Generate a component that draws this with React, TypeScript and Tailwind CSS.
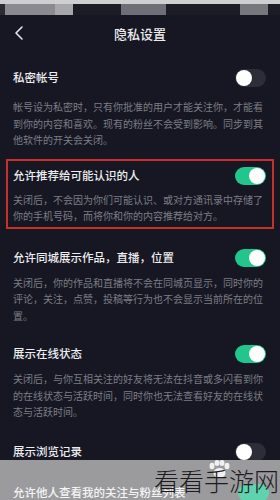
import React from "react";

interface Section {
  title: string;
  lines: string[];
  on: boolean;
  boxed?: boolean;
}

const sections: Section[] = [
  {
    title: "私密帐号",
    lines: [
      "帐号设为私密时，只有你批准的用户才能关注你，才能看",
      "到你的内容和喜欢。现有的粉丝不会受到影响。同步到其",
      "他软件的开关会关闭。",
    ],
    on: false,
  },
  {
    title: "允许推荐给可能认识的人",
    lines: [
      "关闭后，不会因为你们可能认识、或对方通讯录中存储了",
      "你的手机号码，而将你和你的内容推荐给对方。",
    ],
    on: true,
    boxed: true,
  },
  {
    title: "允许同城展示作品，直播，位置",
    lines: [
      "关闭后，你的作品和直播将不会在同城页显示，同时你的",
      "评论，关注，点赞，投稿等行为也不会显示当前所在的位",
      "置。",
    ],
    on: true,
  },
  {
    title: "展示在线状态",
    lines: [
      "关闭后，与你互相关注的好友将无法在抖音或多闪看到你",
      "的在线状态与活跃时间，同时你也无法查看好友的在线状",
      "态与活跃时间。",
    ],
    on: true,
  },
];

function Toggle({ on }: { on: boolean }) {
  return (
    <div
      className={`w-[31px] h-[18px] rounded-full flex items-center px-[1px] ${
        on ? "bg-[#22c58b] justify-end" : "bg-[#2c2d37] justify-start"
      }`}
    >
      <div className="w-[16px] h-[16px] rounded-full bg-white" />
    </div>
  );
}

export default function App(): React.JSX.Element {
  const gaps = ["mt-[14px]", "mt-[8px]", "mt-[17px]", "mt-[16px]"];
  const descGaps = ["mt-[11px]", "mt-[6px]", "mt-[7px]", "mt-[7px]"];

  return (
    <div
      className="w-[280px] h-[500px] overflow-hidden bg-[#161722] relative"
      style={{ fontFamily: '"Noto Sans CJK SC", "Noto Sans", sans-serif' }}
    >
      {/* status bar (blurred) */}
      <div className="h-[4px] bg-[#cfcfd1]" />
      <div className="h-[11px] flex">
        <div className="w-[5px] bg-[#2a2b33]" />
        <div className="w-[50px] bg-[#8a8a90]" />
        <div className="w-[18px] bg-[#a7a7ab]" />
        <div className="w-[48px] bg-[#1b1c26]" />
        <div className="w-[45px] bg-[#6e6f76]" />
        <div className="w-[74px] bg-[#1b1c26]" />
        <div className="w-[28px] bg-[#77787e]" />
        <div className="flex-1 bg-[#1b1c26]" />
      </div>

      {/* header */}
      <div className="h-[37px] flex items-center relative">
        <svg
          className="absolute left-[13px] top-[10px]"
          width="12"
          height="16"
          viewBox="0 0 12 16"
          fill="none"
          stroke="#e6e6ea"
          strokeWidth="1.6"
          strokeLinecap="round"
          strokeLinejoin="round"
        >
          <path d="M9 2 L3 8 L9 14" />
        </svg>
        <div className="w-full text-center text-[13px] text-[#ececef] font-medium">隐私设置</div>
      </div>

      {sections.map((s, i) => (
        <div
          key={s.title}
          className={`${gaps[i]} mx-[6px] pl-[5px] pr-[6px] border-2 ${
            s.boxed ? "border-[#c6302b] pt-[5px] pb-[2px]" : "border-transparent"
          }`}
        >
          <div className="h-[20px] flex items-center justify-between">
            <span className="text-[11.5px] text-[#eeeef1] font-medium">{s.title}</span>
            <Toggle on={s.on} />
          </div>
          <div className={`${descGaps[i]} text-[10px] leading-[16.5px] text-[#7c7d86]`}>
            {s.lines.map((l) => (
              <div key={l} className="whitespace-nowrap">
                {l}
              </div>
            ))}
          </div>
        </div>
      ))}

      <div className="mt-[19px] mx-[6px] pl-[7px] pr-[8px] h-[20px] flex items-center justify-between">
        <span className="text-[11.5px] text-[#eeeef1] font-medium">展示浏览记录</span>
        <Toggle on={false} />
      </div>

      {/* watermark overlay */}
      <div className="absolute left-0 right-0 top-[460px] bottom-0 bg-[#9b9b9e]">
        <div className="absolute left-[13px] top-[24px] text-[11.5px] text-[#f4f4f4] font-medium">
          允许他人查看我的关注与粉丝列表
        </div>
        <div className="absolute left-[238px] top-[24px] w-[31px] h-[18px] rounded-full bg-[#5fd3ae]" />
        <svg className="absolute left-[206px] top-[0px]" width="26" height="20" viewBox="0 0 26 20">
          <g fill="#ffffff" opacity="0.85">
            <ellipse cx="6" cy="6" rx="2.5" ry="3.2" />
            <ellipse cx="11" cy="3" rx="2.5" ry="3" />
            <ellipse cx="16" cy="3" rx="2.5" ry="3" />
            <ellipse cx="21" cy="6" rx="2.5" ry="3.2" />
            <ellipse cx="13.5" cy="13" rx="6" ry="5" />
          </g>
        </svg>
        <div className="absolute left-[154px] top-[4px] text-[25px] leading-[32px] text-[#1c1c1e] font-light whitespace-nowrap">
          看看手游网
        </div>
      </div>
    </div>
  );
}
